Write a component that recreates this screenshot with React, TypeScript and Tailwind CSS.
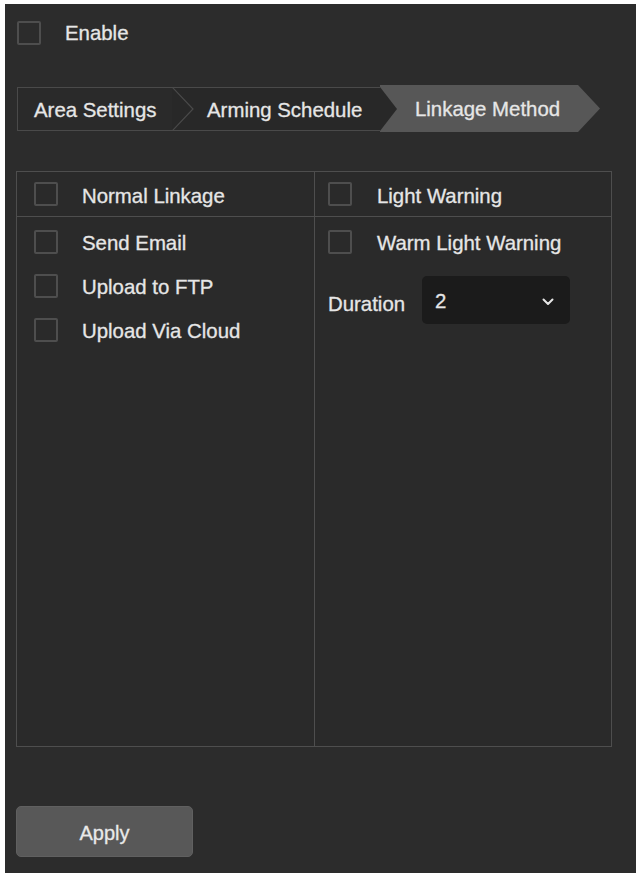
import React from "react";

function Box() {
  return <div className="w-[24px] h-[24px] shrink-0 border-2 border-[#4e4e4e] rounded-[2px]" />;
}

function Row({ label, gap = "gap-[24px]" }: { label: string; gap?: string }) {
  return (
    <div className={`flex items-center h-[44px] ${gap}`}>
      <Box />
      <span className="mt-[3px]">{label}</span>
    </div>
  );
}

export default function App() {
  return (
    <div className="w-[637px] h-[873px] bg-white pt-[4px] pl-[5px] pr-px text-[20.4px] leading-none text-[#e6e6e6] font-['Liberation_Sans',Arial,sans-serif] [-webkit-text-stroke:0.3px_#e6e6e6]">
      <div className="w-full h-[869px] bg-[#2c2c2c] flex flex-col">
        {/* Enable */}
        <div className="flex items-center gap-[24px] ml-[12px] mt-[17px] h-[24px]">
          <Box />
          <span>Enable</span>
        </div>

        {/* Tabs */}
        <div className="flex ml-[12px] mt-[42px] h-[44px]">
          <div className="relative w-[155px] h-full border-y border-l border-[#4a4a4a] bg-[#2a2a2a] flex items-center pl-[16px]">
            <span className="mt-[2px]">Area Settings</span>
            <svg className="absolute top-[-1px] right-[-22px] z-20" width="22" height="44" viewBox="0 0 22 44">
              <polyline points="0,0 21,22 0,44" fill="none" stroke="#4a4a4a" strokeWidth="1.2" />
            </svg>
          </div>
          <div className="relative z-10 w-[208px] h-full border-y border-[#4a4a4a] bg-[#282828] flex items-center pl-[35px]">
            <span className="mt-[2px]">Arming Schedule</span>
            <svg className="absolute top-[-1px] right-[-17px]" width="17" height="44" viewBox="0 0 17 44">
              <polygon points="0,0 17,22 0,44" fill="#282828" />
            </svg>
          </div>
          <div className="w-[220px] h-[47px] -mt-[2px] bg-[#575757] flex items-center pl-[35px] [clip-path:polygon(0_0,calc(100%-22px)_0,100%_50%,calc(100%-22px)_100%,0_100%)]">
            <span className="mt-[2px]">Linkage Method</span>
          </div>
        </div>

        {/* Linkage grid */}
        <div className="ml-[11px] mt-[40px] w-[596px] h-[576px] border border-[#4e4e4e] grid grid-cols-[298px_1fr] bg-[#2a2a2a]">
          <div className="border-r border-[#4e4e4e] flex flex-col">
            <div className="h-[45px] border-b border-[#4e4e4e] pl-[17px] flex items-center gap-[24px]">
              <Box />
              <span className="mt-[5px]">Normal Linkage</span>
            </div>
            <div className="pl-[17px] pt-[3px] flex flex-col">
              <Row label="Send Email" />
              <Row label="Upload to FTP" />
              <Row label="Upload Via Cloud" />
            </div>
          </div>
          <div className="flex flex-col">
            <div className="h-[45px] border-b border-[#4e4e4e] pl-[13px] flex items-center gap-[25px]">
              <Box />
              <span className="mt-[5px]">Light Warning</span>
            </div>
            <div className="pl-[13px] pt-[3px] flex flex-col">
              <Row label="Warm Light Warning" gap="gap-[25px]" />
              <div className="flex items-center mt-[12px] h-[48px] gap-[17px]">
                <span className="mt-[8px]">Duration</span>
                <div className="w-[148px] h-[48px] rounded-[5px] bg-[#1b1b1b] flex items-center justify-between pl-[13px] pr-[16px]">
                  <span className="mt-[2px]">2</span>
                  <svg width="12" height="8" viewBox="0 0 12 8" className="mt-[4px]">
                    <polyline points="1.5,1.5 6,6 10.5,1.5" fill="none" stroke="#e6e6e6" strokeWidth="2" strokeLinecap="round" strokeLinejoin="round" />
                  </svg>
                </div>
              </div>
            </div>
          </div>
        </div>

        {/* Apply */}
        <div className="ml-[11px] mt-[59px]">
          <button className="w-[177px] h-[51px] rounded-[5px] bg-[#585858] border border-[#606060] text-[20px] text-[#eaeaea] pt-[2px]">
            Apply
          </button>
        </div>
      </div>
    </div>
  );
}
